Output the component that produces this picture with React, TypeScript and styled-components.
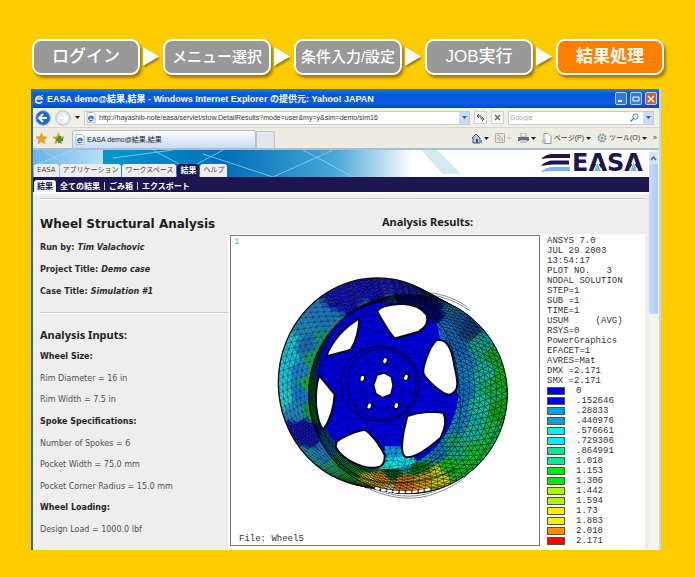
import React from "react";
import styled, { createGlobalStyle } from "styled-components";

const JP = '"Noto Sans CJK JP", sans-serif';

const GlobalStyle = createGlobalStyle`
  * { box-sizing: border-box; }
  body { margin: 0; background: #ffcc00; font-family: "Liberation Sans", ${JP}; }
  button, input { font: inherit; color: inherit; }
  button { margin: 0; padding: 0; border: 0; background: none; cursor: pointer; }
  a { color: inherit; text-decoration: none; }
  h1, h2, h3, p, ul, dl, dd, figure { margin: 0; padding: 0; }
  ul { list-style: none; }
  svg { display: block; flex: none; }
`;

const Page = styled.main`
  padding: 39px 31px 25px;
`;

/* ---------- process steps ---------- */

const Steps = styled.nav`
  display: flex;
  align-items: center;
  margin-bottom: 14px;
  padding-left: 1px;
`;

const Step = styled.button<{ $active?: boolean; $dense?: boolean }>`
  flex: 1 1 0;
  min-width: 0;
  height: 36px;
  border: 2px solid #fff;
  border-radius: 9px;
  background: ${(p) => (p.$active ? "#ff8000" : "#999")};
  box-shadow: 2px 3px 3px rgba(110, 80, 0, 0.65);
  color: #fff;
  font: ${(p) => (p.$active ? 700 : 500)} ${(p) => (p.$dense ? 15 : 17)}px/32px "Liberation Sans", ${JP};
  white-space: nowrap;
  display: flex;
  justify-content: center;
`;

const StepArrow = styled.svg`
  width: 23px;
  height: 26px;
  filter: drop-shadow(1px 2px 1px rgba(110, 80, 0, 0.7));
`;

/* ---------- browser window ---------- */

const Window = styled.section`
  margin-right: 3px;
  border-left: 2px solid #1f66d8;
  border-right: 2px solid #b9dcf8;
  background: #ece9d8;
`;

const TitleBar = styled.header`
  display: flex;
  align-items: center;
  gap: 3px;
  height: 19px;
  padding: 0 2px 0 1px;
  background: linear-gradient(#2c7cf0 0, #0058e0 25%, #0a5ce6 75%, #0046c0);
  color: #fff;
`;

const TitleText = styled.h1`
  flex: 1;
  font: 700 9px/20px "Liberation Sans", ${JP};
  white-space: nowrap;
`;

const WindowButton = styled.button<{ $close?: boolean }>`
  width: 12px;
  height: 13px;
  border: 1px solid #b9d2fa;
  border-radius: 2px;
  background: ${(p) => (p.$close ? "#d9582c" : "#3576e6")};
  display: grid;
  place-items: center;
`;

const WindowButtons = styled.div`
  display: flex;
  gap: 3px;
`;

const AddressBar = styled.div`
  display: flex;
  align-items: center;
  height: 20px;
  padding: 0 5px 0 2px;
  gap: 4px;
  border-bottom: 1px solid #dcd8c8;
  background: #f1efe6;
`;

const IconButton = styled.button`
  display: flex;
  align-items: center;
`;

const BoxButton = styled(IconButton)`
  width: 13px;
  height: 13px;
  justify-content: center;
  border: 1px solid #cfd3d6;
  background: #fafaf6;
`;

const Field = styled.label<{ $search?: boolean }>`
  display: flex;
  align-items: center;
  gap: 3px;
  height: 14px;
  min-width: 0;
  padding-left: 1px;
  border: 1px solid #c4ccd6;
  background: #fff;
  flex: ${(p) => (p.$search ? "0 0 146px" : "1 1 0")};
  color: ${(p) => (p.$search ? "#b4b4b4" : "#333")};
`;

const FieldInput = styled.input`
  flex: 1;
  min-width: 0;
  height: 12px;
  padding: 0;
  border: 0;
  outline: 0;
  background: none;
  font: 7px/12px "Liberation Sans", sans-serif;
  &::placeholder { color: #a8a8a8; }
`;

const FieldDrop = styled.button`
  width: 10px;
  height: 12px;
  background: #c8dcfa;
  display: grid;
  place-items: center;
`;

const TabBar = styled.div`
  display: flex;
  align-items: center;
  height: 22px;
  padding: 0 2px 0 3px;
  border-bottom: 2px solid #a9bdd6;
  background: #efede2;
`;

const Favourites = styled.div`
  display: flex;
  gap: 6px;
  width: 36px;
`;

const PageTab = styled.button`
  display: flex;
  align-items: center;
  gap: 2px;
  flex: 0 1 184px;
  height: 18px;
  align-self: flex-end;
  padding-left: 2px;
  border: 1px solid #b4c0cc;
  border-bottom: 0;
  border-radius: 3px 3px 0 0;
  background: linear-gradient(#fbfdff, #c6dcf6);
  color: #222;
  font: 7px/16px "Liberation Sans", ${JP};
  white-space: nowrap;
`;

const NewTab = styled.button`
  width: 19px;
  height: 17px;
  align-self: flex-end;
  border: 1px solid #bcc4cc;
  border-bottom: 0;
  border-radius: 0 3px 0 0;
  background: #e3e7ea;
`;

const Tools = styled.div`
  display: flex;
  align-items: center;
  gap: 6px;
  margin-left: auto;
  color: #333;
  font: 7px/16px "Liberation Sans", ${JP};
`;

const Tool = styled(IconButton)`
  gap: 2px;
  white-space: nowrap;
`;

/* ---------- EASA page ---------- */

const Viewport = styled.div`
  display: flex;
  background: #fff;
`;

const Site = styled.div`
  flex: 1;
  min-width: 0;
`;

const Scrollbar = styled.div`
  flex: none;
  width: 10px;
  padding: 2px 1px 0 0;
  background: #f3f2ee;
`;

const ScrollArrow = styled.button`
  display: grid;
  place-items: center;
  width: 9px;
  height: 12px;
  background: #d3e3fd;
`;

const ScrollThumb = styled.div`
  height: 150px;
  border-radius: 1px;
  background: linear-gradient(90deg, #c6dcff, #aecbfa);
`;

const Banner = styled.div`
  display: flex;
  align-items: flex-end;
  justify-content: space-between;
  height: 27px;
  padding: 0 4px 0 1px;
  position: relative;
  background: #fff;
`;

const BannerArt = styled.svg`
  position: absolute;
  inset: 0;
  width: 440px;
  height: 27px;
`;

const MenuTabs = styled.nav`
  display: flex;
  gap: 1px;
  position: relative;
`;

const MenuTab = styled.a<{ $active?: boolean }>`
  height: 13px;
  padding: 0 3px;
  border-radius: 3px 3px 0 0;
  background: ${(p) => (p.$active ? "#1e1650" : "#f0eeec")};
  color: ${(p) => (p.$active ? "#fff" : "#44444c")};
  font: ${(p) => (p.$active ? "700 8px" : "400 7px")}/13px "DejaVu Sans", ${JP};
  white-space: nowrap;
`;

const Logo = styled.svg`
  width: 104px;
  height: 24px;
  position: relative;
  align-self: flex-start;
  overflow: visible;
`;

const SubNav = styled.nav`
  display: flex;
  align-items: flex-end;
  height: 15px;
  padding-left: 1px;
  background: #1e1650;
  color: #fff;
`;

const SubLink = styled.a<{ $active?: boolean }>`
  height: 12px;
  padding: 0 ${(p) => (p.$active ? 3 : 4)}px;
  border-radius: 3px 3px 0 0;
  background: ${(p) => (p.$active ? "#f4f4f4" : "transparent")};
  color: ${(p) => (p.$active ? "#1e1650" : "#fff")};
  font: 700 8px/11px ${JP};
`;

const SubDivider = styled.span`
  width: 1px;
  height: 8px;
  margin-bottom: 2px;
  background: #c8c8d8;
`;

const Content = styled.div`
  padding: 4px 4px 0 7px;
  border-top: 2px solid #fff;
  background: #eeeeee;
`;

const Rule = styled.hr`
  flex: none;
  width: 100%;
  margin: 0;
  border: 0;
  height: 2px;
  background: #cacaca;
  border-bottom: 1px solid #fafafa;
`;

const Report = styled.div`
  display: grid;
  grid-template-columns: 188px minmax(0, 1fr);
`;

const Summary = styled.section`
  display: flex;
  flex-direction: column;
  font: 8px/14px "DejaVu Sans", sans-serif;
  color: #4c4c4c;
  padding: 16px 0 13px;
  white-space: nowrap;
`;

const ReportTitle = styled.h2`
  font: 700 12px/16px "DejaVu Sans", sans-serif;
  color: #1b1b1b;
  margin-bottom: 9px;
`;

const Facts = styled.dl`
  display: flex;
  flex-direction: column;
  gap: 8px;
  margin-bottom: 13px;
  color: #2c2c2c;
`;

const Fact = styled.div`
  display: flex;
  gap: 3px;
  font-weight: 700;
  dd { font-style: italic; }
`;

const SectionTitle = styled.h3`
  font: 700 11px/16px "Noto Sans", sans-serif;
  color: #1f1f1f;
`;

const InputsBlock = styled.div`
  flex: 1;
  display: flex;
  flex-direction: column;
  gap: 7px;
  padding-top: 13px;
`;

const Inputs = styled.ul`
  flex: 1;
  display: flex;
  flex-direction: column;
  justify-content: space-between;
`;

const InputLine = styled.li<{ $head?: boolean }>`
  font-weight: ${(p) => (p.$head ? 700 : 400)};
  color: ${(p) => (p.$head ? "#1f1f1f" : "#505050")};
`;

const Results = styled.section`
  padding-top: 14px;
  display: flex;
  flex-direction: column;
  gap: 4px;
`;

const ResultsHead = styled.header`
  padding-right: 18px;
  text-align: center;
`;

const Plot = styled.figure`
  display: grid;
  grid-template-columns: minmax(0, 1fr) 104px;
  gap: 1px;
  padding: 1px 0 4px 2px;
  background: #fff;
  font: 9px/10px "Liberation Mono", monospace;
  color: #333;
`;

const PlotFrame = styled.div`
  display: grid;
  border: 1px solid #777;
  > * { grid-area: 1 / 1; }
`;

const PlotNumber = styled.span`
  padding: 1px 3px;
  color: #58b4e8;
`;

const PlotCaption = styled.figcaption`
  align-self: end;
  padding: 0 8px 1px;
`;

const Wheel = styled.svg`
  width: 100%;
  height: auto;
`;

const Legend = styled.div`
  padding-left: 6px;
  padding-top: 1px;
`;

const LegendText = styled.p`
  white-space: pre;
`;

const ScaleRow = styled.li`
  display: flex;
  align-items: center;
  gap: 11px;
`;

const Swatch = styled.span<{ $color: string }>`
  width: 18px;
  height: 8px;
  border: 1px solid #55553c;
  background: ${(p) => p.$color};
`;

/* ---------- wheel mesh ---------- */

type Pt = [number, number];
type Ellipse = { cx: number; cy: number; rx: number; ry: number };

const BACK: Ellipse = { cx: 322, cy: 341, rx: 297, ry: 314 };
const FRONT: Ellipse = { cx: 414, cy: 376, rx: 298, ry: 298 };
const HUB: Ellipse = { cx: 352, cy: 350, rx: 214, ry: 250 };

const SEEDS: [number, number, string][] = [
  [200, 90, "#0808b0"], [300, 50, "#0404b8"], [400, 70, "#0404b0"], [250, 115, "#0606b0"],
  [470, 95, "#0a0a90"], [500, 130, "#0a0a80"], [330, 90, "#0404b0"],
  [130, 125, "#1a7cc4"], [170, 145, "#1478c4"], [90, 175, "#1888c4"], [110, 230, "#1070bc"],
  [200, 165, "#1a80b8"], [350, 103, "#2080b8"], [280, 130, "#2080a8"],
  [60, 210, "#18c0d8"], [40, 300, "#10d0e0"], [40, 390, "#20d0d8"], [60, 270, "#10c8e0"],
  [85, 300, "#1484d8"], [95, 380, "#087cd8"], [75, 430, "#148cc8"],
  [130, 270, "#10a858"], [122, 350, "#10b040"], [128, 420, "#10a830"], [160, 220, "#109878"],
  [90, 480, "#0000a8"], [120, 510, "#0404a8"], [75, 485, "#0404a8"],
  [110, 560, "#1094b8"], [160, 560, "#107cc4"], [140, 590, "#10a89a"], [170, 520, "#107cc8"],
  [190, 600, "#10a858"], [240, 630, "#08a818"], [220, 570, "#109050"],
  [290, 625, "#d0d010"], [330, 640, "#e89818"], [400, 645, "#ec8010"], [460, 630, "#e8aa10"], [510, 625, "#d8d818"],
  [290, 598, "#107840"], [370, 605, "#086820"], [450, 600, "#088020"], [540, 600, "#10c020"],
  [400, 585, "#10c0b0"], [450, 560, "#08a8b0"], [500, 545, "#0880b8"], [350, 670, "#d8c8b0"],
  [560, 160, "#1860a8"], [600, 180, "#184080"], [540, 120, "#1878a0"], [530, 180, "#1078d0"],
  [560, 240, "#1070c4"], [590, 300, "#1080c4"], [580, 380, "#0878d0"], [570, 460, "#0888c4"],
  [630, 230, "#10a890"], [640, 310, "#10b8a0"], [630, 400, "#10c0a0"], [610, 480, "#10b8a0"], [560, 540, "#10b080"],
  [680, 260, "#10a828"], [700, 340, "#10b010"], [695, 420, "#08a810"], [670, 370, "#10b050"], [670, 490, "#10b848"], [620, 560, "#08c030"],
];

const hex = (s: string) => [1, 3, 5].map((i) => parseInt(s.slice(i, i + 2), 16));

function stressColor(x: number, y: number) {
  let total = 0;
  const sum = [0, 0, 0];
  for (const [sx, sy, c] of SEEDS) {
    const d = (sx - x) ** 2 + (sy - y) ** 2 + 20;
    const w = 1 / d ** 4;
    total += w;
    hex(c).forEach((v, i) => { sum[i] += v * w; });
  }
  return `rgb(${sum.map((v) => Math.round(v / total)).join(",")})`;
}

const onEllipse = (e: Ellipse, a: number): Pt => [e.cx + e.rx * Math.cos(a), e.cy + e.ry * Math.sin(a)];

function noise(n: number) {
  const v = Math.sin(n * 127.1 + 311.7) * 43758.5453;
  return v - Math.floor(v);
}

function band(inner: Ellipse, outer: Ellipse, rings: number, parts: number) {
  const at = (r: number, k: number): Pt => {
    const a = ((k + (r % 2) / 2) / parts) * Math.PI * 2;
    const p = onEllipse(inner, a);
    const q = onEllipse(outer, a);
    const t = r / rings;
    return [p[0] + (q[0] - p[0]) * t, p[1] + (q[1] - p[1]) * t];
  };
  const out: { d: string; fill: string }[] = [];
  const tri = (a: Pt, b: Pt, c: Pt) => {
    const pts = [a, b, c].map((p) => p.map((v) => v.toFixed(1)).join(" "));
    out.push({ d: `M${pts.join("L")}Z`, fill: stressColor((a[0] + b[0] + c[0]) / 3, (a[1] + b[1] + c[1]) / 3) });
  };
  for (let r = 0; r < rings; r++) {
    for (let k = 0; k < parts; k++) {
      const s = r % 2;
      tri(at(r, k), at(r, k + 1), at(r + 1, k + s));
      tri(at(r + 1, k), at(r + 1, k + 1), at(r, k + 1 - s));
    }
  }
  return out;
}

function hubMesh() {
  const step = 18;
  const node = (i: number, j: number): Pt => [
    130 + i * step + (noise(i * 61 + j) - 0.5) * 13,
    90 + j * step + (noise(i + j * 83) - 0.5) * 13,
  ];
  let d = "";
  for (let i = 0; i < 26; i++) {
    for (let j = 0; j < 29; j++) {
      const a = node(i, j);
      const b = node(i + 1, j);
      const c = node(i, j + 1);
      const e = node(i + 1, j + 1);
      const diag = noise(i * 7 + j * 13) > 0.5 ? [a, e] : [b, c];
      d += `M${b}L${a}L${c}M${diag[0]}L${diag[1]}`;
    }
  }
  return d;
}

const BARREL = band(FRONT, BACK, 7, 90);
const WALL = band(HUB, FRONT, 9, 92);
const HUB_LINES = hubMesh();

const WINDOWS = [
  "M322 128Q328 108 395 104Q448 106 470 138Q480 168 446 188L377 208Q366 206 322 128Z",
  "M500 214C530 206 546 240 553 290C562 330 572 366 540 377C520 380 468 332 460 312C458 292 478 232 500 214Z",
  "M412 441C450 428 500 426 520 432C530 450 526 476 512 506C480 534 440 565 410 565C390 558 396 520 401 488Z",
  "M200 518C216 502 270 482 285 483C302 490 334 536 344 558C346 592 330 597 300 596C258 592 206 560 197 532Z",
  "M148 320L194 376Q190 440 160 482Q144 466 138 410Q136 350 148 320Z",
  "M168 262Q198 190 268 148Q266 206 242 242Q215 250 168 262Z",
];
const BOLTS: Pt[] = [[345, 275], [277, 328], [408, 325], [298, 411], [379, 410]];

const WheelDrawing = () => (
  <Wheel viewBox="-117 -99 924 924" role="img" aria-label="Wheel displacement plot">
    <defs>
      <clipPath id="hub"><ellipse {...HUB} /></clipPath>
    </defs>
    <g fill="none" stroke="#8a8a8a" strokeWidth="3">
      <path d="M462 70Q530 72 590 112" />
      <path d="M476 77Q540 84 600 125" />
      <path d="M275 650Q400 712 500 672T610 585" />
      <path d="M290 650Q400 702 490 668T600 590" />
    </g>
    <g stroke="#000" strokeOpacity="0.5" strokeWidth="1.700" strokeLinejoin="round">
      {BARREL.map((t, i) => <path key={i} d={t.d} fill={t.fill} />)}
    </g>
    <ellipse {...BACK} fill="none" stroke="#111" strokeWidth="4" />
    <ellipse {...FRONT} fill="#123" />
    <g stroke="#000" strokeOpacity="0.5" strokeWidth="1.900" strokeLinejoin="round">
      {WALL.map((t, i) => <path key={i} d={t.d} fill={t.fill} />)}
    </g>
    <g clipPath="url(#hub)">
      <rect x="120" y="80" width="470" height="540" fill="#0000e4" />
      <path d="M500 150L590 130V540L510 515L565 460V380L510 212Z" fill="#1478cc" />
      <path d="M345 532H392L400 568H340Z" fill="#10a0e0" />
      <path d="M340 566L430 562L470 620H290Z" fill="#10e0d8" />
      <path d="M150 505L195 516V545L230 590H150Z" fill="#1488c0" />
      <path d={HUB_LINES} fill="none" stroke="#000038" strokeOpacity="0.55" strokeWidth="1.800" />
      <g fill="none" stroke="#000030">
        <ellipse cx="330" cy="345" rx="118" ry="112" strokeWidth="5" strokeOpacity="0.7" />
        <ellipse cx="336" cy="345" rx="104" ry="104" strokeWidth="8" strokeOpacity="0.3" />
        <ellipse cx="338" cy="350" rx="62" ry="68" strokeWidth="3" strokeOpacity="0.5" />
      </g>
    </g>
    <g fill="#fff" stroke="#050520" strokeWidth="6" strokeLinejoin="round">
      {WINDOWS.map((d) => <path key={d} d={d} />)}
    </g>
    <path d="M322 318L342 312L364 324L369 350L362 376L338 386L318 374L311 348Z" fill="#fff" stroke="#000018" strokeWidth="4" />
    <g fill="#fff" stroke="#000018" strokeWidth="4">
      {BOLTS.map(([x, y]) => <ellipse key={x} cx={x} cy={y} rx="7" ry="10" transform={`rotate(20 ${x} ${y})`} />)}
    </g>
    <g fill="none" stroke="#001018">
      <ellipse {...FRONT} strokeWidth="3" />
      <path d="M480 84A296 296 0 0 0 130 460Q160 560 270 625" strokeWidth="4" strokeOpacity="0.7" />
      <path d="M500 112A280 284 0 0 0 146 450Q180 560 300 610" strokeWidth="3" strokeOpacity="0.6" />
      <path d="M200 590Q360 690 560 600" strokeWidth="5" strokeOpacity="0.5" />
      <path d="M280 640Q400 690 520 650Q640 600 700 440" strokeWidth="3" strokeOpacity="0.6" />
      <path d="M340 602Q450 620 540 540Q590 470 560 300Q545 200 500 150" strokeWidth="3" strokeOpacity="0.6" />
    </g>
    <path d="M315 657Q395 680 480 660" fill="none" stroke="#fff" strokeWidth="7" strokeDasharray="14 5" />
  </Wheel>
);

/* ---------- small icons ---------- */

const IePage = () => (
  <svg width="10" height="11" viewBox="0 0 10 11">
    <path d="M1 .5h6l2 2v8H1z" fill="#fff" stroke="#b8b8b8" />
    <path d="M7 7.500A2.300 2.300 0 1 1 7.200 6H3" fill="none" stroke="#2a72c8" strokeWidth="1.300" />
  </svg>
);

const IeLogo = () => (
  <svg width="10" height="12" viewBox="0 0 10 12">
    <path d="M8 8.500A3.400 3.400 0 1 1 8.400 6H2.500" fill="none" stroke="#d8ecff" strokeWidth="1.600" />
    <path d="M1 10Q1 6 9 2" fill="none" stroke="#f0d060" />
  </svg>
);

const Caret = ({ color = "#222" }: { color?: string }) => (
  <svg width="5" height="3" viewBox="0 0 5 3"><path d="M0 0h5L2.500 3z" fill={color} /></svg>
);

const Star = ({ plus }: { plus?: boolean }) => (
  <svg width="11" height="11" viewBox="0 0 11 11">
    <path d="M5.500 0L7 3.700l4 .3-3 2.600.9 4L5.500 8.500 2.100 10.600 3 6.600 0 4l4-.3z" fill="#f6a21c" stroke="#d07a10" strokeWidth=".5" />
    {plus && <path d="M5 3h3v2h2v3H8v2H5V8H3V5h2z" fill="#3f9a3a" />}
  </svg>
);

const NavArrow = ({ back }: { back?: boolean }) => (
  <svg width="16" height="16" viewBox="0 0 16 16">
    <circle cx="8" cy="8" r="7.200" fill={back ? "#2468c4" : "#e4ebf2"} stroke={back ? "#7da4d8" : "#b0bccb"} />
    <path d={back ? "M8 4L4 8l4 4M4 8h8" : "M8 4l4 4-4 4M12 8H4"} fill="none" stroke="#fff" strokeWidth="2" />
  </svg>
);

const HomeIcon = () => (
  <svg width="11" height="11" viewBox="0 0 11 11">
    <path d="M1 5L5 1l4 4v5H2V5z" fill="#b8c8dc" stroke="#3a5684" />
    <path d="M5 6h2v4H5z" fill="#3a5684" /><path d="M8 7h3v3H8z" fill="#7a94b4" />
  </svg>
);

const FeedIcon = () => (
  <svg width="10" height="10" viewBox="0 0 10 10">
    <rect x=".5" y=".5" width="9" height="9" rx="1" fill="#e8e8e4" stroke="#a8a8a4" />
    <path d="M2 5a3 3 0 0 1 3 3M2 2.500A5.500 5.500 0 0 1 7.500 8" fill="none" stroke="#a0a09c" />
  </svg>
);

const PrintIcon = () => (
  <svg width="11" height="10" viewBox="0 0 11 10">
    <path d="M3 0h5v4H3z" fill="#f4f4f4" stroke="#888" strokeWidth=".7" />
    <path d="M0 4h11v4H0z" fill="#6c7078" /><path d="M2 7h7v3H2z" fill="#c8ccd0" />
  </svg>
);

const PageIcon = () => (
  <svg width="10" height="11" viewBox="0 0 10 11">
    <path d="M2 .5h4l3 3v7H2z" fill="#fff" stroke="#9098a4" /><path d="M0 6h4v4H0z" fill="#b8c8dc" />
  </svg>
);

const GearIcon = () => (
  <svg width="10" height="10" viewBox="0 0 10 10">
    <circle cx="5" cy="5" r="3.500" fill="#e8eef4" stroke="#8898ac" strokeWidth="2" strokeDasharray="2 .7" />
    <circle cx="5" cy="5" r="1.500" fill="#8898ac" />
  </svg>
);

const Arrow = () => (
  <StepArrow viewBox="0 0 23 26"><path d="M3 3l16 9.500L3 22z" fill="#fff" /></StepArrow>
);

const EasaLogo = () => (
  <Logo viewBox="0 0 104 24">
    <path d="M0 9Q5 4 12 4h17v4H13Q6 8 0 9z" fill="#1e1650" />
    <path d="M0 16Q5 10.500 12 10.500h16v4H13Q6 14.500 0 16z" fill="#1e1650" />
    <path d="M0 22Q5 17 12 17h17v4H13Q6 21 0 22z" fill="#78b4e8" />
    <text x="31" y="21" fontFamily="DejaVu Sans" fontWeight="700" fontSize="24" fill="#1e1650">EASA</text>
    <g fill="#78b4e8" stroke="#fff">
      <path d="M56.500 12L60.500 21.500H52.500z" />
      <path d="M92.500 12L96.500 21.500H88.500z" />
    </g>
  </Logo>
);

/* ---------- data ---------- */

const STEPS = [
  { label: "ログイン" },
  { label: "メニュー選択", dense: true },
  { label: "条件入力/設定", dense: true },
  { label: "JOB実行" },
  { label: "結果処理", active: true },
];

const FACTS = [
  ["Run by:", "Tim Valachovic"],
  ["Project Title:", "Demo case"],
  ["Case Title:", "Simulation #1"],
];

const INPUTS = [
  { text: "Wheel Size:", head: true },
  { text: "Rim Diameter = 16 in" },
  { text: "Rim Width = 7.5 in" },
  { text: "Spoke Specifications:", head: true },
  { text: "Number of Spokes = 6" },
  { text: "Pocket Width = 75.0 mm" },
  { text: "Pocket Corner Radius = 15.0 mm" },
  { text: "Wheel Loading:", head: true },
  { text: "Design Load = 1000.0 lbf" },
];

const SOLUTION = `ANSYS 7.0
JUL 29 2003
13:54:17
PLOT NO.   3
NODAL SOLUTION
STEP=1
SUB =1
TIME=1
USUM     (AVG)
RSYS=0
PowerGraphics
EFACET=1
AVRES=Mat
DMX =2.171
SMX =2.171`;

const SCALE = [
  ["#0000f0", "0"], ["#0000f0", ".152646"], ["#00a0e8", ".28833"], ["#00a0e8", ".440976"],
  ["#00f0f8", ".576661"], ["#00f0f8", ".729306"], ["#00e898", ".864991"], ["#00e898", "1.018"],
  ["#00e810", "1.153"], ["#00e810", "1.306"], ["#a8f800", "1.442"], ["#a8f800", "1.594"],
  ["#f8f000", "1.73"], ["#f8f000", "1.883"], ["#ff9000", "2.018"], ["#ff0000", "2.171"],
];

export default function App() {
  return (
    <Page>
      <GlobalStyle />
      <Steps>
        {STEPS.map((s, i) => (
          <React.Fragment key={s.label}>
            {i > 0 && <Arrow />}
            <Step $active={s.active} $dense={s.dense}>{s.label}</Step>
          </React.Fragment>
        ))}
      </Steps>

      <Window>
        <TitleBar>
          <IeLogo />
          <TitleText>EASA demo@結果,結果 - Windows Internet Explorer の提供元: Yahoo! JAPAN</TitleText>
          <WindowButtons>
            <WindowButton aria-label="Minimize"><svg width="8" height="8"><path d="M1 6h4" stroke="#fff" strokeWidth="2" /></svg></WindowButton>
            <WindowButton aria-label="Restore"><svg width="8" height="8"><path d="M1 2h6v4H1z" fill="none" stroke="#fff" /></svg></WindowButton>
            <WindowButton aria-label="Close" $close><svg width="8" height="8"><path d="M1 1l6 6M7 1L1 7" stroke="#fff" strokeWidth="1.500" /></svg></WindowButton>
          </WindowButtons>
        </TitleBar>

        <AddressBar>
          <IconButton aria-label="Back"><NavArrow back /></IconButton>
          <IconButton aria-label="Forward"><NavArrow /></IconButton>
          <IconButton aria-label="History"><Caret /></IconButton>
          <Field>
            <IePage />
            <FieldInput aria-label="Address" defaultValue="http://hayashib-note/easa/servlet/stow.DetailResults?mode=user&my=y&sim=demo/sim16" />
            <FieldDrop aria-label="Recent addresses"><Caret color="#3a5a98" /></FieldDrop>
          </Field>
          <BoxButton aria-label="Refresh"><svg width="9" height="9"><path d="M1 3h4v3M3 1L1 3l2 2M8 6H5M6 4l2 2-2 2" fill="none" stroke="#555" /></svg></BoxButton>
          <BoxButton aria-label="Stop"><svg width="9" height="9"><path d="M2 2l5 5M7 2L2 7" stroke="#666" strokeWidth="1.300" /></svg></BoxButton>
          <Field $search>
            <FieldInput aria-label="Search" placeholder="Google" />
            <IconButton aria-label="Go"><svg width="11" height="11"><circle cx="6.500" cy="4.500" r="2.700" fill="#e6f2ff" stroke="#4a80c4" /><path d="M4.500 6.500L1.500 9.500" stroke="#4a80c4" strokeWidth="1.500" /></svg></IconButton>
            <FieldDrop aria-label="Search providers"><Caret color="#3a5a98" /></FieldDrop>
          </Field>
        </AddressBar>

        <TabBar>
          <Favourites>
            <IconButton aria-label="Favourites"><Star /></IconButton>
            <IconButton aria-label="Add favourite"><Star plus /></IconButton>
          </Favourites>
          <PageTab><IePage />EASA demo@結果,結果</PageTab>
          <NewTab aria-label="New tab" />
          <Tools>
            <Tool aria-label="Home"><HomeIcon /><Caret /></Tool>
            <Tool aria-label="Feeds"><FeedIcon /><Caret color="#ccc" /></Tool>
            <Tool aria-label="Print"><PrintIcon /><Caret /></Tool>
            <Tool><PageIcon />ページ(P)<Caret /></Tool>
            <Tool><GearIcon />ツール(O)<Caret /></Tool>
            <Tool aria-label="More">»</Tool>
          </Tools>
        </TabBar>

        <Viewport>
          <Site>
            <Banner>
              <BannerArt viewBox="0 0 440 27">
                <defs>
                  <linearGradient id="sky">
                    <stop offset="0" stopColor="#6cb2e8" />
                    <stop offset="1" stopColor="#b8e0f8" />
                  </linearGradient>
                  <linearGradient id="sea">
                    <stop offset="0" stopColor="#0098cc" />
                    <stop offset=".4" stopColor="#0070b8" />
                    <stop offset=".75" stopColor="#48a8d8" />
                    <stop offset="1" stopColor="#fff" />
                  </linearGradient>
                </defs>
                <path d="M0 0h70v27H0z" fill="url(#sky)" />
                <path d="M70 0h310v27H70z" fill="url(#sea)" />
                <path d="M388 0h16l24 24h-18z" fill="#d4eaf0" />
                <path d="M0 16L40 0M10 0l40 27M120 0l50 27M140 27L190 0M80 8l60-8M170 4l70 23M240 27L300 0M270 0l50 27" stroke="#a8d8f4" strokeOpacity=".7" fill="none" />
              </BannerArt>
              <MenuTabs>
                <MenuTab href="#easa">EASA</MenuTab>
                <MenuTab href="#applications">アプリケーション</MenuTab>
                <MenuTab href="#workspace">ワークスペース</MenuTab>
                <MenuTab href="#results" $active>結果</MenuTab>
                <MenuTab href="#help">ヘルプ</MenuTab>
              </MenuTabs>
              <EasaLogo />
            </Banner>
            <SubNav>
              <SubLink href="#result" $active>結果</SubLink>
              <SubLink href="#all">全ての結果</SubLink>
              <SubDivider />
              <SubLink href="#trash">ごみ箱</SubLink>
              <SubDivider />
              <SubLink href="#export">エクスポート</SubLink>
            </SubNav>

            <Content>
              <Rule />
              <Report>
                <Summary>
                  <ReportTitle>Wheel Structural Analysis</ReportTitle>
                  <Facts>
                    {FACTS.map(([k, v]) => (
                      <Fact key={k}><dt>{k}</dt><dd>{v}</dd></Fact>
                    ))}
                  </Facts>
                  <Rule />
                  <InputsBlock>
                    <SectionTitle>Analysis Inputs:</SectionTitle>
                    <Inputs>
                      {INPUTS.map((l) => <InputLine key={l.text} $head={l.head}>{l.text}</InputLine>)}
                    </Inputs>
                  </InputsBlock>
                </Summary>
                <Results>
                  <ResultsHead><SectionTitle>Analysis Results:</SectionTitle></ResultsHead>
                  <Plot>
                    <PlotFrame>
                      <WheelDrawing />
                      <PlotNumber>1</PlotNumber>
                      <PlotCaption>File: Wheel5</PlotCaption>
                    </PlotFrame>
                    <Legend>
                      <LegendText>{SOLUTION}</LegendText>
                      <ul>
                        {SCALE.map(([color, value]) => (
                          <ScaleRow key={value}><Swatch $color={color} />{value}</ScaleRow>
                        ))}
                      </ul>
                    </Legend>
                  </Plot>
                </Results>
              </Report>
            </Content>
          </Site>
          <Scrollbar>
            <ScrollArrow aria-label="Scroll up"><svg width="7" height="5"><path d="M1 4l2.500-3L6 4" fill="none" stroke="#4a6a9c" strokeWidth="1.500" /></svg></ScrollArrow>
            <ScrollThumb />
          </Scrollbar>
        </Viewport>
      </Window>
    </Page>
  );
}
